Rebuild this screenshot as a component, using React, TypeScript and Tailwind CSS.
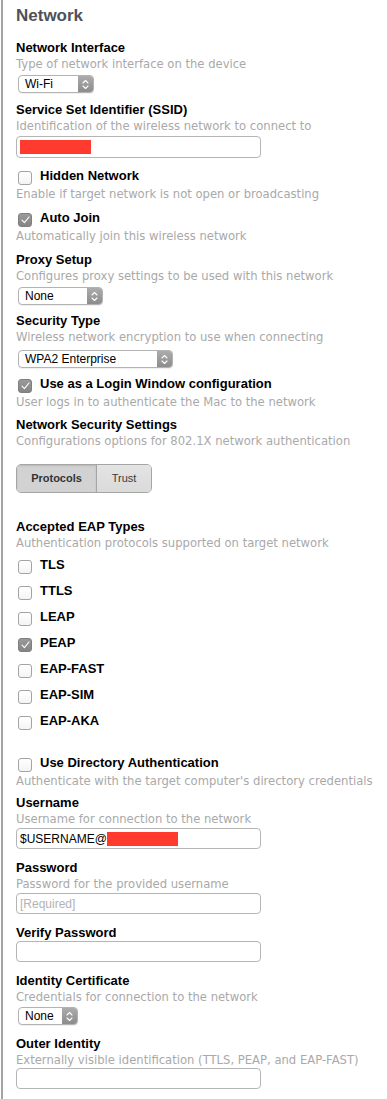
import type { ReactNode } from "react";

const desc = "font-['DejaVu_Sans',sans-serif] text-[11.6px] leading-4 text-[#a9a9a9] whitespace-nowrap";
const label = "font-['Liberation_Sans',Arial,sans-serif] text-[13px] leading-4 font-bold text-black whitespace-nowrap";

function Label({ children, className = "" }: { children: ReactNode; className?: string }) {
  return <div className={`${label} ${className}`}>{children}</div>;
}

function Desc({ children, className = "" }: { children: ReactNode; className?: string }) {
  return <div className={`${desc} ${className}`}>{children}</div>;
}

function Checkbox({ checked }: { checked?: boolean }) {
  if (checked) {
    return (
      <span className="mt-[3px] flex h-[14px] w-[14px] shrink-0 items-center justify-center rounded-[3px] border border-[#7f7f7f] bg-gradient-to-b from-[#9a9a9a] to-[#858585]">
        <svg width="9" height="8" viewBox="0 0 9 8" fill="none">
          <path d="M1 4.2 L3.4 6.6 L8 1" stroke="white" strokeWidth="1.1" strokeLinecap="round" strokeLinejoin="round" />
        </svg>
      </span>
    );
  }
  return (
    <span className="mt-[3px] h-[14px] w-[14px] shrink-0 rounded-[3px] border border-[#a3a3a3] bg-gradient-to-b from-white to-[#f4f4f4]" />
  );
}

function CheckRow({ text, checked, className = "" }: { text: string; checked?: boolean; className?: string }) {
  return (
    <div className={`flex h-[17px] items-start gap-[8px] pl-[2px] ${className}`}>
      <Checkbox checked={checked} />
      <span className={label}>{text}</span>
    </div>
  );
}

function Popup({ value, width, className = "" }: { value: string; width: string; className?: string }) {
  return (
    <div
      className={`ml-[2px] flex h-[18px] items-stretch overflow-hidden rounded-[4px] border border-[#b3b3b3] bg-white shadow-[0_1px_0_rgba(0,0,0,0.06)] ${width} ${className}`}
    >
      <span className="flex flex-1 items-center pl-[6px] font-['Liberation_Sans',Arial,sans-serif] text-[12px] text-black">
        {value}
      </span>
      <span className="flex w-[15px] items-center justify-center bg-gradient-to-b from-[#acacac] to-[#8c8c8c]">
        <svg width="7" height="11" viewBox="0 0 7 11" fill="none">
          <path d="M1 4 L3.5 1.5 L6 4 M1 7 L3.5 9.5 L6 7" stroke="white" strokeWidth="1.1" strokeLinecap="round" strokeLinejoin="round" />
        </svg>
      </span>
    </div>
  );
}

function Field({ children, muted, className = "" }: { children?: ReactNode; muted?: boolean; className?: string }) {
  return (
    <div
      className={`flex h-[21px] w-[245px] items-center rounded-[4px] border border-[#b5b5b5] bg-white pl-[3px] font-['Liberation_Sans',Arial,sans-serif] text-[12px] ${muted ? "text-[#b3b3b3]" : "text-black"} ${className}`}
    >
      {children}
    </div>
  );
}

const eapTypes = [
  { name: "TLS" },
  { name: "TTLS" },
  { name: "LEAP" },
  { name: "PEAP", checked: true },
  { name: "EAP-FAST" },
  { name: "EAP-SIM" },
  { name: "EAP-AKA" },
];

export default function App() {
  return (
    <div className="h-[1099px] w-[387px] overflow-hidden bg-white pl-px">
      <div className="h-full border-l-2 border-[#a4a4a4] pl-[13px]">
        <h1 className="pt-[4px] font-['Liberation_Sans',Arial,sans-serif] text-[17px] leading-6 font-bold text-[#4d5259]">
          Network
        </h1>

        <Label className="mt-[12px]">Network Interface</Label>
        <Desc>Type of network interface on the device</Desc>
        <Popup value="Wi-Fi" width="w-[76px]" className="mt-[3px]" />

        <Label className="mt-[9px]">Service Set Identifier (SSID)</Label>
        <Desc>Identification of the wireless network to connect to</Desc>
        <Field className="mt-[2px] h-[22px]">
          <span className="h-[14px] w-[71px] bg-[#ff3b30]" />
        </Field>

        <CheckRow text="Hidden Network" className="mt-[10px]" />
        <Desc className="mt-px">Enable if target network is not open or broadcasting</Desc>

        <CheckRow text="Auto Join" checked className="mt-[8px]" />
        <Desc className="mt-px">Automatically join this wireless network</Desc>

        <Label className="mt-[8px]">Proxy Setup</Label>
        <Desc>Configures proxy settings to be used with this network</Desc>
        <Popup value="None" width="w-[85px]" className="mt-[3px]" />

        <Label className="mt-[8px]">Security Type</Label>
        <Desc>Wireless network encryption to use when connecting</Desc>
        <Popup value="WPA2 Enterprise" width="w-[155px]" className="mt-[5px]" />

        <CheckRow text="Use as a Login Window configuration" checked className="mt-[8px]" />
        <Desc className="mt-px">User logs in to authenticate the Mac to the network</Desc>

        <Label className="mt-[7px]">Network Security Settings</Label>
        <Desc>Configurations options for 802.1X network authentication</Desc>

        <div className="mt-[15px] flex h-[29px] w-[136px] overflow-hidden rounded-[5px] border border-[#a5a5a5] font-['Liberation_Sans',Arial,sans-serif] text-[11px]">
          <span className="flex w-[80px] items-center justify-center border-r border-[#a5a5a5] bg-[#d2d2d2] font-bold text-[#333] shadow-[inset_0_1px_2px_rgba(0,0,0,0.12)]">
            Protocols
          </span>
          <span className="flex flex-1 items-center justify-center bg-gradient-to-b from-[#e4e4e4] to-[#dadada] text-[#3a3a3a]">
            Trust
          </span>
        </div>

        <Label className="mt-[26px]">Accepted EAP Types</Label>
        <Desc>Authentication protocols supported on target network</Desc>
        <div className="mt-[6px] flex flex-col gap-[9px]">
          {eapTypes.map((t) => (
            <CheckRow key={t.name} text={t.name} checked={t.checked} />
          ))}
        </div>

        <CheckRow text="Use Directory Authentication" className="mt-[25px]" />
        <Desc className="mt-px">Authenticate with the target computer&apos;s directory credentials</Desc>

        <Label className="mt-[6px]">Username</Label>
        <Desc>Username for connection to the network</Desc>
        <Field className="mt-px">
          $USERNAME@
          <span className="h-[14px] w-[71px] bg-[#ff3b30]" />
        </Field>

        <Label className="mt-[11px]">Password</Label>
        <Desc>Password for the provided username</Desc>
        <Field muted className="mt-px">
          [Required]
        </Field>

        <Label className="mt-[11px]">Verify Password</Label>
        <Field />

        <Label className="mt-[11px]">Identity Certificate</Label>
        <Desc>Credentials for connection to the network</Desc>
        <Popup value="None" width="w-[60px]" className="mt-[2px]" />

        <Label className="mt-[11px]">Outer Identity</Label>
        <Desc>Externally visible identification (TTLS, PEAP, and EAP-FAST)</Desc>
        <Field />
      </div>
    </div>
  );
}
